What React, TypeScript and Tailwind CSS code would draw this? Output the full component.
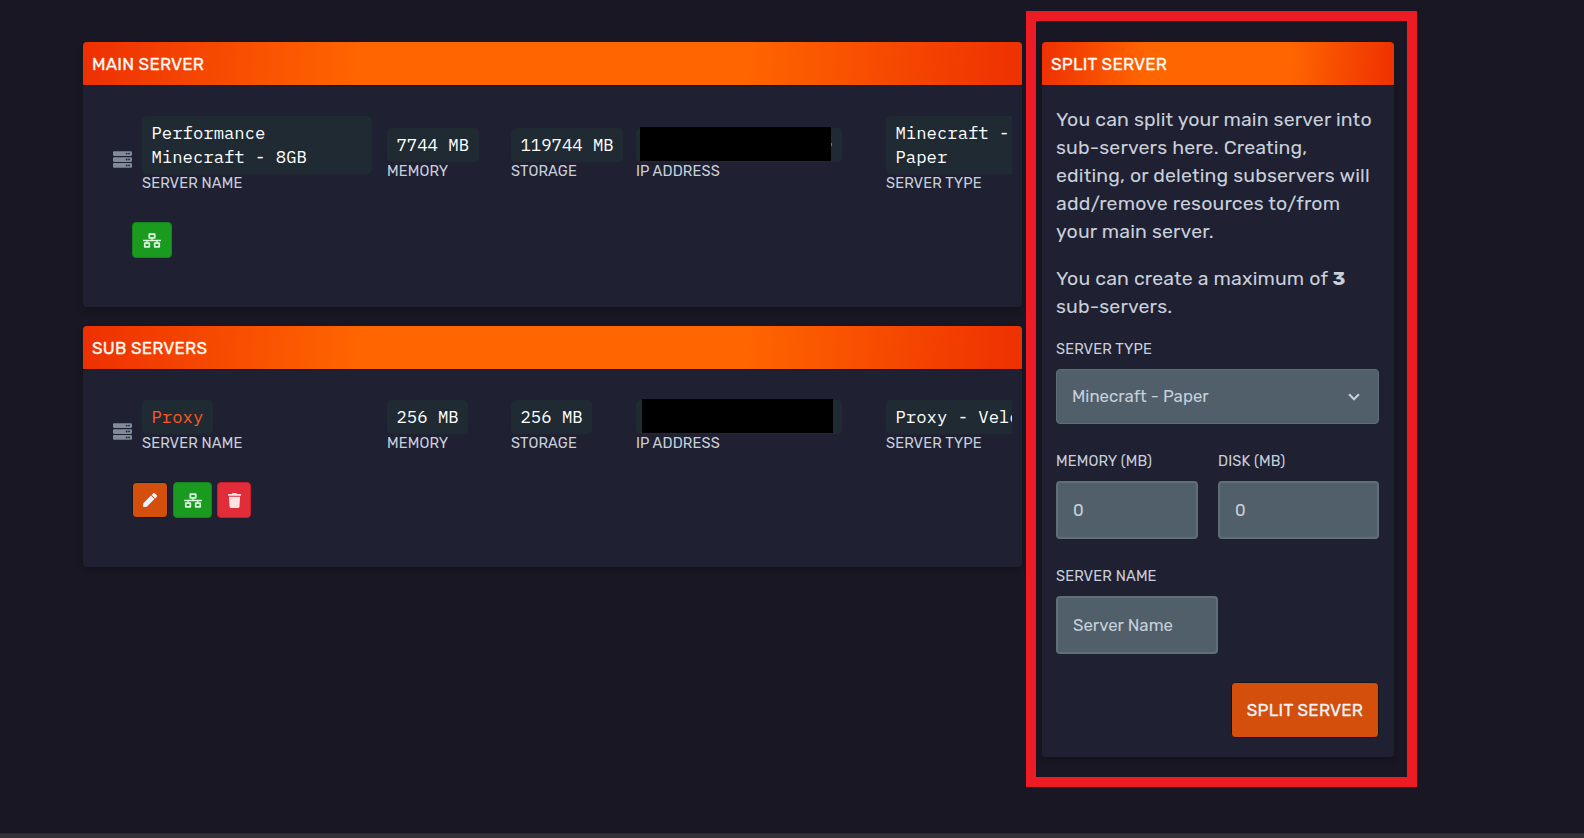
import React from "react";
import { FaNetworkWired, FaPen, FaServer, FaTrash } from "react-icons/fa";

const headerClass =
  "flex h-11 shrink-0 items-center border-b border-[#0f0f18] bg-[linear-gradient(95deg,#ee3000_0%,#ff6600_30%,#ff6600_70%,#ee3000_100%)] pl-[9px] text-[17px] font-normal leading-[20px] tracking-[0.22px] text-[#fffaf7] uppercase [-webkit-text-stroke:0.3px_#fffaf7]";

const cardClass =
  "flex flex-col overflow-hidden rounded bg-[#202033] shadow-[0_3px_6px_rgba(0,0,0,0.2)]";

const chipClass =
  "relative rounded-[5px] bg-[#202a33] px-[9.5px] py-[5px] font-['IBM_Plex_Mono','Liberation_Mono',monospace] text-[17.28px] leading-[24px] text-white";

function Field({ label, width, children }: { label: string; width: string; children: React.ReactNode }) {
  return (
    <div className={"flex shrink-0 flex-col items-start " + width}>
      {children}
      <div className="whitespace-nowrap text-[14.6px] leading-[18px] tracking-[0.12px] text-[#c8d0da] uppercase">{label}</div>
    </div>
  );
}

function IconButton({ className, children }: { className: string; children: React.ReactNode }) {
  return (
    <button className={"flex h-9 items-center justify-center rounded border " + className}>{children}</button>
  );
}

const greenButton = "border-[#15831c] bg-[#1a9a1f] text-[#d9fbdb]";

function MainServer() {
  return (
    <section className={cardClass + " h-[265px]"}>
      <h2 className={headerClass}>Main Server</h2>
      <div className="mr-[10px] flex h-[106px] items-center overflow-hidden pt-[29px] pl-[30px]">
        <FaServer className="mt-[11px] mr-[10px] size-[19px] shrink-0 text-[#7f8b99]" />
        <Field label="Server Name" width="w-[245px]">
          <div className={chipClass + " w-[230px]"}>
            Performance
            <br />
            Minecraft - 8GB
          </div>
        </Field>
        <Field label="Memory" width="w-[124px]">
          <div className={chipClass}>7744 MB</div>
        </Field>
        <Field label="Storage" width="w-[125px]">
          <div className={chipClass}>119744 MB</div>
        </Field>
        <Field label="IP Address" width="w-[250px]">
          <div className={chipClass + " h-[34px] w-[206px]"}>
            <div className="absolute -top-px left-[4px] h-[34px] w-[191px] bg-black" />
            <div className="absolute top-[15px] left-[195px] h-[3px] w-px bg-[#e04a3a]" />
          </div>
        </Field>
        <Field label="Server Type" width="w-[245px]">
          <div className={chipClass + " w-[230px]"}>
            Minecraft -
            <br />
            Paper
          </div>
        </Field>
      </div>
      <div className="flex pt-[30px] pl-[49px]">
        <IconButton className={greenButton + " w-10"}>
          <FaNetworkWired className="h-[15px] w-[18px]" />
        </IconButton>
      </div>
    </section>
  );
}

function SubServers() {
  return (
    <section className={cardClass + " h-[241px]"}>
      <h2 className={headerClass}>Sub Servers</h2>
      <div className="mr-[10px] flex h-[82px] items-center overflow-hidden pt-[30px] pl-[30px]">
        <FaServer className="mt-[10px] mr-[10px] size-[19px] shrink-0 text-[#7f8b99]" />
        <Field label="Server Name" width="w-[245px]">
          <div className={chipClass}>
            <span className="text-[#ff5722]">Proxy</span>
          </div>
        </Field>
        <Field label="Memory" width="w-[124px]">
          <div className={chipClass}>256 MB</div>
        </Field>
        <Field label="Storage" width="w-[125px]">
          <div className={chipClass}>256 MB</div>
        </Field>
        <Field label="IP Address" width="w-[250px]">
          <div className={chipClass + " h-[34px] w-[206px]"}>
            <div className="absolute -top-px left-[6px] h-[34px] w-[191px] bg-black" />
          </div>
        </Field>
        <Field label="Server Type" width="w-[245px]">
          <div className={chipClass + " whitespace-nowrap"}>Proxy - Velocity</div>
        </Field>
      </div>
      <div className="flex gap-[5px] pt-[30px] pl-[49px]">
        <IconButton className="w-9 border-[#14141c] bg-[#d44e0c] text-[#e9f3fc]">
          <FaPen className="size-[14px]" />
        </IconButton>
        <IconButton className={greenButton + " w-[39px]"}>
          <FaNetworkWired className="h-[15px] w-[18px]" />
        </IconButton>
        <IconButton className="w-[34px] border-[#c81e2c] bg-[#e12d39] text-[#ffe3e3]">
          <FaTrash className="h-[15px] w-[13px]" />
        </IconButton>
      </div>
    </section>
  );
}

const labelClass = "text-[14.6px] leading-[18px] tracking-[0.14px] text-[#c8d0da] uppercase";
const inputClass =
  "h-[58px] rounded border-2 border-[#606d7b] bg-[#515f6b] px-[15px] text-[16.8px] text-[#c8d0da] outline-none placeholder:text-[#c8d0da]";
const textClass = "whitespace-nowrap text-[19.5px] leading-[28px] tracking-[0.14px] text-[#c8d0da]";

function SplitServer() {
  return (
    <section className={cardClass + " h-[715px] w-[352px] shrink-0"}>
      <h2 className={headerClass}>Split Server</h2>
      <div className="flex flex-col pt-[20px] pr-[15px] pl-[14px]">
        <p className={textClass}>
          You can split your main server into
          <br />
          sub-servers here. Creating,
          <br />
          editing, or deleting subservers will
          <br />
          add/remove resources to/from
          <br />
          your main server.
        </p>
        <p className={textClass + " mt-[19px]"}>
          You can create a maximum of <strong className="font-bold">3</strong>
          <br />
          sub-servers.
        </p>
        <div className={labelClass + " mt-[19px]"}>Server Type</div>
        <div className="mt-[11px] flex h-[55px] items-center justify-between rounded border border-[#606d7b] bg-[#515f6b] pr-[14px] pl-[15px] text-[16.8px] text-[#c8d0da]">
          <span>Minecraft - Paper</span>
          <svg viewBox="0 0 20 20" className="size-5" fill="currentColor">
            <path d="M9.293 12.95l.707.707L15.657 8l-1.414-1.414L10 10.828 5.757 6.586 4.343 8z" />
          </svg>
        </div>
        <div className="mt-[28px] flex gap-5">
          <div className="flex w-[142px] flex-col gap-[11px]">
            <label className={labelClass}>Memory (MB)</label>
            <input className={inputClass} defaultValue="0" />
          </div>
          <div className="flex w-[161px] flex-col gap-[11px]">
            <label className={labelClass}>Disk (MB)</label>
            <input className={inputClass} defaultValue="0" />
          </div>
        </div>
        <div className="mt-[28px] flex w-[162px] flex-col gap-[11px]">
          <label className={labelClass}>Server Name</label>
          <input className={inputClass} placeholder="Server Name" />
        </div>
        <button className="mt-[28px] h-[56px] w-[148px] self-end rounded border border-[#14141c] bg-[#d44e0c] pt-px text-[17px] font-normal tracking-[0.25px] text-[#edf2f8] uppercase [-webkit-text-stroke:0.3px_#edf2f8]">
          Split Server
        </button>
      </div>
    </section>
  );
}

export default function App() {
  return (
    <div className="relative flex h-[838px] w-[1584px] flex-col justify-between overflow-hidden bg-[#181723] font-['Rubik','Roboto',sans-serif]">
      <main className="flex gap-5 pt-[42px] pl-[83px]">
        <div className="flex w-[939px] shrink-0 flex-col gap-[19px]">
          <MainServer />
          <SubServers />
        </div>
        <SplitServer />
      </main>
      <div className="pointer-events-none absolute top-[11px] left-[1026px] h-[776px] w-[391px] border-[10px] border-[#ed1c24]" />
      <footer className="h-[5px] border-t border-[#29292e] bg-[#333336]" />
    </div>
  );
}
